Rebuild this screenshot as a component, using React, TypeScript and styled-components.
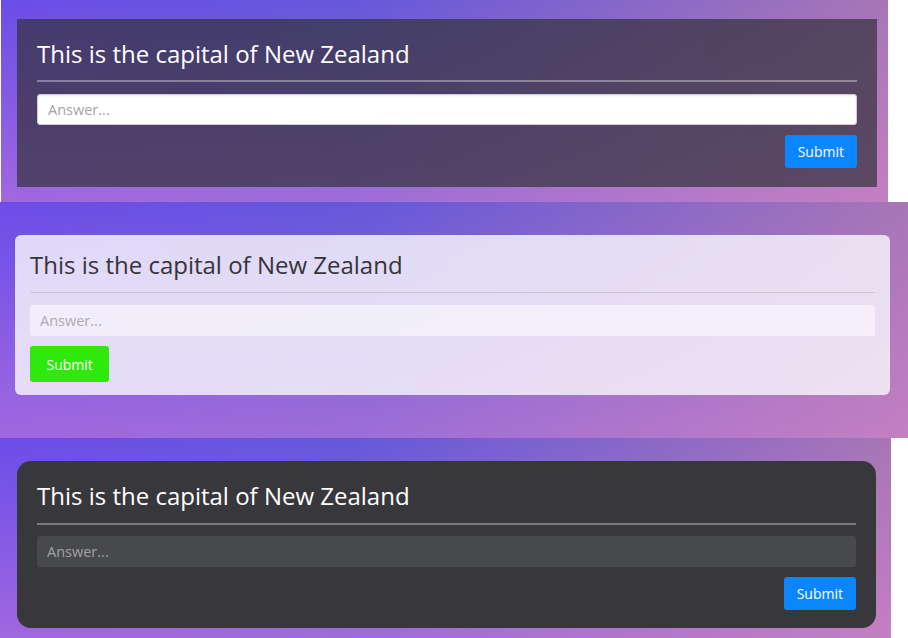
import React from 'react';
import styled, { createGlobalStyle, css } from 'styled-components';

type Variant = 'glass' | 'frost' | 'dark';

const GlobalStyle = createGlobalStyle`
  html, body { margin: 0; padding: 0; background: #ffffff; }
  body { font-family: "Open Sans", "Noto Sans", sans-serif; }
  *, *::before, *::after { box-sizing: border-box; }
`;

const Page = styled.main`
  display: flex;
  flex-direction: column;
  align-items: flex-start;
  width: 908px;
`;

const Scene = styled.section<{ $width: number; $offset: number; $pad: string }>`
  width: ${(p) => p.$width}px;
  margin-left: ${(p) => p.$offset}px;
  padding: ${(p) => p.$pad};
  background-image:
    linear-gradient(to bottom, rgba(236, 140, 210, 0) 0%, rgba(236, 140, 210, 0.42) 100%),
    linear-gradient(to right, #6b4de9 0%, #6558da 40%, #a776b6 100%);
`;

const cardVariants = {
  glass: css`
    background: rgba(50, 50, 58, 0.7);
    border-radius: 0;
    padding: 22px 20px 19px;
  `,
  frost: css`
    background: rgba(246, 243, 252, 0.84);
    border-radius: 6px;
    padding: 17px 15px 13px;
  `,
  dark: css`
    background: #38373c;
    border-radius: 14px;
    padding: 22px 20px 18px;
  `,
};

const Card = styled.form<{ $variant: Variant }>`
  display: flex;
  flex-direction: column;
  ${(p) => cardVariants[p.$variant]}
`;

const Title = styled.h2<{ $variant: Variant }>`
  margin: 0;
  font-size: 24px;
  font-weight: 400;
  line-height: 26px;
  color: ${(p) => (p.$variant === 'frost' ? '#363438' : '#ffffff')};
`;

const dividerGap: Record<Variant, string> = { glass: '13px', frost: '14px', dark: '14px' };
const dividerColor: Record<Variant, string> = {
  glass: 'rgba(255,255,255,0.35)',
  frost: '#cbc7d0',
  dark: '#7a797d',
};

const Divider = styled.hr<{ $variant: Variant }>`
  margin: ${(p) => dividerGap[p.$variant]} 0 ${(p) => (p.$variant === 'dark' ? '11px' : '12px')};
  border: 0;
  height: ${(p) => (p.$variant === 'frost' ? '1px' : '2px')};
  background: ${(p) => dividerColor[p.$variant]};
`;

const inputVariants = {
  glass: css`
    background: #ffffff;
    border: 1px solid #cfcfd4;
    box-shadow: inset 0 1px 2px rgba(0, 0, 0, 0.08);
    color: #333;
    &::placeholder { color: #a4a4a8; }
  `,
  frost: css`
    background: rgba(255, 255, 255, 0.5);
    border: 0;
    color: #333;
    &::placeholder { color: #adaab2; }
  `,
  dark: css`
    background: #48494d;
    border: 0;
    color: #eee;
    &::placeholder { color: #a2a2a6; }
  `,
};

const AnswerInput = styled.input<{ $variant: Variant }>`
  display: block;
  width: 100%;
  height: 31px;
  padding: 0 10px;
  border-radius: 3px;
  font-family: inherit;
  font-size: 14.5px;
  outline: none;
  ${(p) => inputVariants[p.$variant]}
`;

const Actions = styled.div<{ $align: 'start' | 'end' }>`
  display: flex;
  justify-content: ${(p) => (p.$align === 'end' ? 'flex-end' : 'flex-start')};
  margin-top: 10px;
`;

const SubmitButton = styled.button<{ $tone: 'blue' | 'green' }>`
  height: ${(p) => (p.$tone === 'green' ? '36px' : '33px')};
  padding: 0 ${(p) => (p.$tone === 'green' ? '16.5px' : '13px')};
  border: 0;
  border-radius: 3px;
  background: ${(p) => (p.$tone === 'green' ? '#30e90c' : '#0b86ff')};
  color: #ffffff;
  font-family: inherit;
  font-size: 14px;
  cursor: pointer;
`;

type QuizCardProps = { variant: Variant; tone: 'blue' | 'green'; align: 'start' | 'end' };

function QuizCard({ variant, tone, align }: QuizCardProps) {
  return (
    <Card $variant={variant} onSubmit={(e) => e.preventDefault()}>
      <Title $variant={variant}>This is the capital of New Zealand</Title>
      <Divider $variant={variant} />
      <AnswerInput $variant={variant} placeholder="Answer..." />
      <Actions $align={align}>
        <SubmitButton $tone={tone} type="submit">Submit</SubmitButton>
      </Actions>
    </Card>
  );
}

export default function App() {
  return (
    <>
      <GlobalStyle />
      <Page>
        <Scene $width={887} $offset={1} $pad="19px 11px 15px 16px">
          <QuizCard variant="glass" tone="blue" align="end" />
        </Scene>
        <Scene $width={908} $offset={0} $pad="33px 18px 43px 15px">
          <QuizCard variant="frost" tone="green" align="start" />
        </Scene>
        <Scene $width={891} $offset={0} $pad="23px 15px 12px 17px">
          <QuizCard variant="dark" tone="blue" align="end" />
        </Scene>
      </Page>
    </>
  );
}
